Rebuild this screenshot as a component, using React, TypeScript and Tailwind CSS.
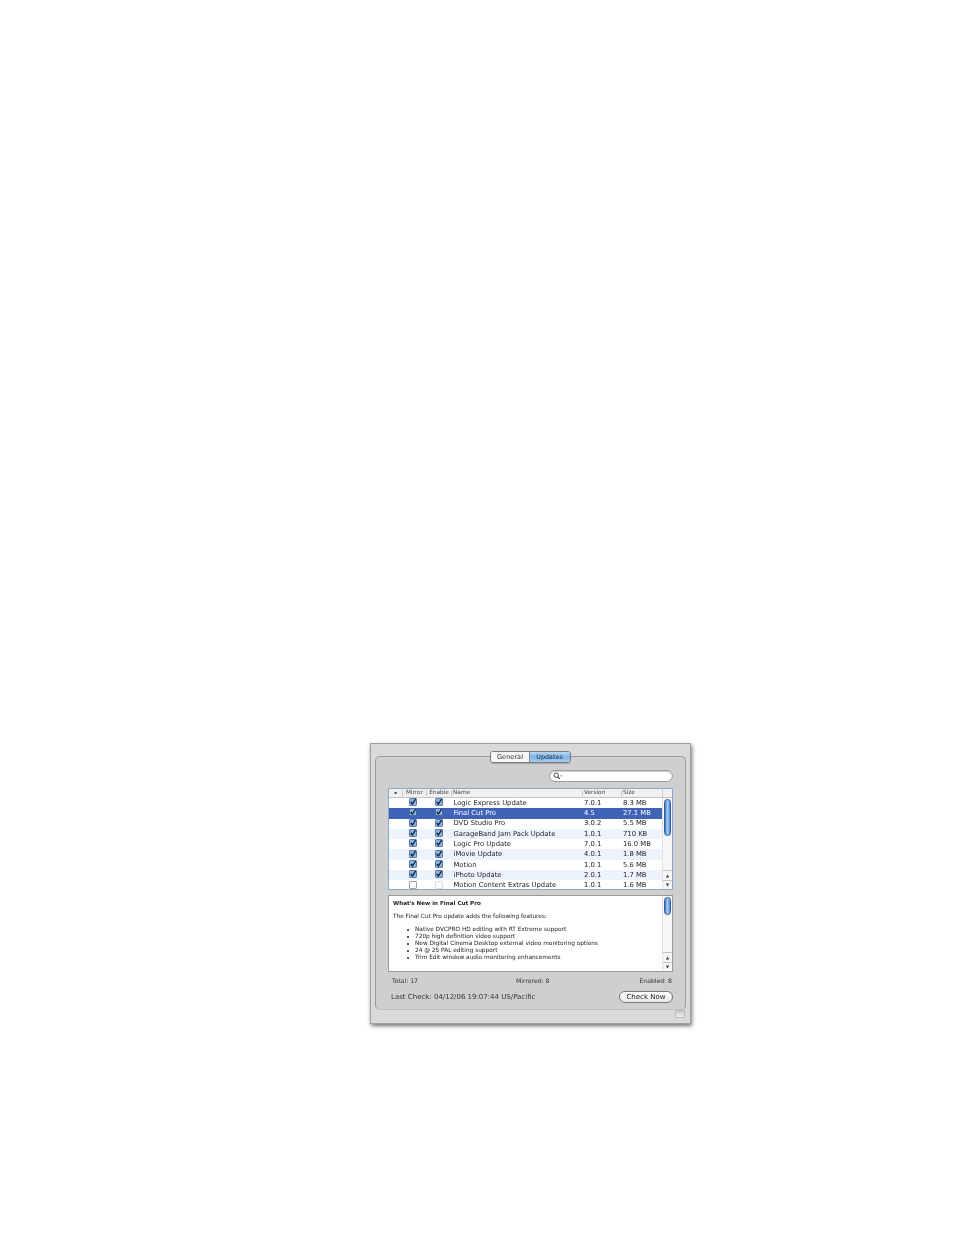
import React from "react";

const rows: [boolean, boolean, string, string, string][] = [
  [true, true, "Logic Express Update", "7.0.1", "8.3 MB"],
  [true, true, "Final Cut Pro", "4.5", "27.1 MB"],
  [true, true, "DVD Studio Pro", "3.0.2", "5.5 MB"],
  [true, true, "GarageBand Jam Pack Update", "1.0.1", "710 KB"],
  [true, true, "Logic Pro Update", "7.0.1", "16.0 MB"],
  [true, true, "iMovie Update", "4.0.1", "1.8 MB"],
  [true, true, "Motion", "1.0.1", "5.6 MB"],
  [true, true, "iPhoto Update", "2.0.1", "1.7 MB"],
  [false, false, "Motion Content Extras Update", "1.0.1", "1.6 MB"],
];

const features = [
  "Native DVCPRO HD editing with RT Extreme support",
  "720p high definition video support",
  "New Digital Cinema Desktop external video monitoring options",
  "24 @ 25 PAL editing support",
  "Trim Edit window audio monitoring enhancements",
];

const gridCols = "grid grid-cols-[13px_24px_25px_131px_39px_41px]";

function Check({ on, faint }: { on: boolean; faint?: boolean }) {
  return (
    <svg width="8" height="8" viewBox="0 0 8 8" className="block">
      <rect
        x="0.4"
        y="0.4"
        width="7.2"
        height="7.2"
        rx="1.2"
        fill={on ? "#86b4e6" : "#fbfbfb"}
        stroke={on ? "#3a5680" : faint ? "#d0d0d0" : "#777"}
        strokeWidth="0.8"
      />
      {on && <path d="M1.8 4l1.6 2L6.6 1" fill="none" stroke="#10182c" strokeWidth="1.3" />}
    </svg>
  );
}

function Scrollbar({ thumbH }: { thumbH: number }) {
  return (
    <div className="w-[10px] shrink-0 flex flex-col border-l border-[#e2e2e2] bg-[#f6f6f6]">
      <div className="flex-1 pt-[1px] px-[1px]">
        <div
          className="w-[7px] mx-auto rounded-full border border-[#2f5ea6] bg-[linear-gradient(90deg,#3d78c6,#a9cdf2_50%,#4a86d2)]"
          style={{ height: thumbH }}
        />
      </div>
      <div className="h-[10px] flex items-center justify-center border-t border-[#c4c4c4] text-[4px] leading-none text-[#333]">▲</div>
      <div className="h-[9px] flex items-center justify-center border-t border-[#c4c4c4] text-[4px] leading-none text-[#333]">▼</div>
    </div>
  );
}

export default function App() {
  return (
    <div className="min-h-[1235px] bg-white pt-[743px] pl-[370px] font-['DejaVu_Sans',sans-serif] text-[6.6px] leading-none text-[#222]">
      <div className="w-[321px] h-[281px] bg-[#d9d9d9] border border-[#a0a0a0] shadow-[1px_2px_4px_rgba(0,0,0,0.55)] blur-[0.45px] pt-[12px] px-[4px] relative">
        {/* tab panel */}
        <div className="relative h-[254px] border border-[#9a9a9a] border-b-[#bdbdbd] rounded-[5px] bg-[#cfcfcf] pt-[13px] pl-[12px] pr-[12px]">
          <div className="absolute -top-[6px] left-[114px] flex h-[12px] w-[81px] rounded-[3px] border border-[#7d7d7d] overflow-hidden shadow-[0_1px_1px_rgba(0,0,0,0.2)]">
            <div className="w-[38px] flex items-center justify-center bg-[#f6f6f6] text-[#333]">General</div>
            <div className="flex-1 flex items-center justify-center pr-[1px] border-l border-[#7d8ba3] bg-[linear-gradient(180deg,#b9d8f5,#7fb4e6_50%,#a7cff3)] text-[6.4px] text-[#1c2d48]">Updates</div>
          </div>

          {/* search */}
          <div className="flex justify-end">
            <div className="w-[124px] h-[12px] rounded-full border border-[#9c9c9c] bg-white flex items-center pl-[3px] shadow-[inset_0_1px_1px_rgba(0,0,0,0.2)]">
              <svg width="10" height="8" viewBox="0 0 10 8">
                <circle cx="3.2" cy="3.2" r="2.2" fill="none" stroke="#333" strokeWidth="0.9" />
                <path d="M4.8 4.8L6.8 7" stroke="#333" strokeWidth="1.1" />
                <path d="M7.4 3.4h2L8.4 4.8z" fill="#444" />
              </svg>
            </div>
          </div>

          {/* table */}
          <div className="mt-[6px] h-[102px] border border-[#86a9d6] bg-white flex flex-col overflow-hidden">
            <div className="h-[9px] shrink-0 flex border-b border-[#c4c4c4] bg-[#f1f1f1] text-[5.8px] text-[#444]">
              <div className={gridCols + " items-center"}>
                <div className="text-center text-[4px]">▪</div>
                <div className="text-center border-l border-[#c8c8c8]">Mirror</div>
                <div className="text-center border-l border-[#c8c8c8]">Enable</div>
                <div className="pl-[1px] border-l border-[#c8c8c8]">Name</div>
                <div className="pl-[1px] border-l border-[#c8c8c8]">Version</div>
                <div className="pl-[1px] border-l border-[#c8c8c8]">Size</div>
              </div>
              <div className="flex-1 border-l border-[#c8c8c8]" />
            </div>
            <div className="flex flex-1 min-h-0">
              <div className="w-[273px] shrink-0 overflow-hidden">
                {rows.map((r, i) => {
                  const selected = i === 1;
                  const bg = selected ? "bg-[#3f63b6] text-white" : i % 2 === 1 ? "bg-[#edf3fc]" : "bg-white";
                  return (
                    <div key={r[2]} className={`${gridCols} ${bg} h-[10.3px] items-center text-[6.8px]`}>
                      <div />
                      <div className="flex justify-center pr-[2px] pb-[2px]"><Check on={r[0]} /></div>
                      <div className="flex justify-center pb-[2px]"><Check on={r[1]} faint /></div>
                      <div className="pl-[2.5px] whitespace-nowrap">{r[2]}</div>
                      <div className="pl-[2px]">{r[3]}</div>
                      <div className="pl-[2px] whitespace-nowrap">{r[4]}</div>
                    </div>
                  );
                })}
              </div>
              <Scrollbar thumbH={37} />
            </div>
          </div>

          {/* description */}
          <div className="mt-[5px] h-[77px] border border-[#9a9a9a] bg-white flex">
            <div className="flex-1 pl-[4px] pt-[5px] text-[5.8px] text-[#222]">
              <div className="font-bold text-[5.6px]">What's New in Final Cut Pro</div>
              <div className="mt-[7px]">The Final Cut Pro update adds the following features:</div>
              <ul className="mt-[7px] pl-[14px] leading-[7px]">
                {features.map((f) => (
                  <li key={f} className="flex items-center gap-[6px]">
                    <span className="w-[2px] h-[2px] rounded-full bg-[#222] shrink-0" />
                    <span>{f}</span>
                  </li>
                ))}
              </ul>
            </div>
            <Scrollbar thumbH={18} />
          </div>

          {/* totals */}
          <div className="mt-[6px] flex justify-between px-[4px] pr-[1px] text-[6.1px] text-[#333] leading-[6px]">
            <span>Total: 17</span>
            <span className="pl-[8px]">Mirrored: 8</span>
            <span>Enabled: 8</span>
          </div>

          {/* last check */}
          <div className="mt-[7px] flex items-center justify-between pl-[3px]">
            <span className="text-[7px] text-[#333]">Last Check: 04/12/06 19:07:44 US/Pacific</span>
            <div className="w-[54px] h-[12px] rounded-full border border-[#777] bg-[linear-gradient(180deg,#fff,#e8e8e8)] flex items-center justify-center text-[7px] text-[#222]">Check Now</div>
          </div>
        </div>

        {/* resize handle */}
        <div className="absolute right-[5px] bottom-[5px] w-[10px] h-[8px] border border-[#bbb] bg-[linear-gradient(180deg,#c4c8d0,#f0f0f0)]" />
      </div>
    </div>
  );
}
